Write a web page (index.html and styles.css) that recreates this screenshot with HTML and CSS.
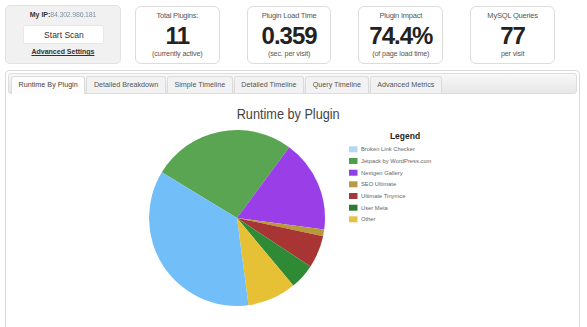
FILE: index.html
```html
<!DOCTYPE html>
<html>
<head>
<meta charset="utf-8">
<link rel="stylesheet" href="styles.css">
</head>
<body>
<div class="page">
  <div class="stats">
    <div class="ipbox">
      <div class="ipline"><b>My IP:</b><span class="ip">84.302.986.181</span></div>
      <button class="scan">Start Scan</button>
      <a class="adv">Advanced Settings</a>
    </div>
    <div class="stat">
      <div class="label">Total Plugins:</div>
      <div class="num">11</div>
      <div class="sub">(currently active)</div>
    </div>
    <div class="stat">
      <div class="label">Plugin Load Time</div>
      <div class="num">0.359</div>
      <div class="sub">(sec. per visit)</div>
    </div>
    <div class="stat">
      <div class="label">Plugin Impact</div>
      <div class="num">74.4%</div>
      <div class="sub">(of page load time)</div>
    </div>
    <div class="stat">
      <div class="label">MySQL Queries</div>
      <div class="num">77</div>
      <div class="sub">per visit</div>
    </div>
  </div>
  <div class="panel">
    <ul class="tabs">
      <li class="active">Runtime By Plugin</li>
      <li>Detailed Breakdown</li>
      <li>Simple Timeline</li>
      <li>Detailed Timeline</li>
      <li>Query Timeline</li>
      <li>Advanced Metrics</li>
    </ul>
    <svg class="chart" width="569" height="240" viewBox="8 94 569 240">
      <text class="ctitle" x="236.7" y="118.5" textLength="103" lengthAdjust="spacingAndGlyphs">Runtime by Plugin</text>
      <path fill="#5aa552" d="M237 218 L161.8 172.3 A88 88 0 0 1 289.2 147.2 Z"/>
      <path fill="#9a3fe8" d="M237 218 L289.2 147.2 A88 88 0 0 1 324.2 229.6 Z"/>
      <path fill="#b89a3a" d="M237 218 L324.2 229.6 A88 88 0 0 1 323.1 236.3 Z"/>
      <path fill="#a83434" d="M237 218 L323.1 236.3 A88 88 0 0 1 310.5 266.4 Z"/>
      <path fill="#2f8a36" d="M237 218 L310.5 266.4 A88 88 0 0 1 293.3 285.6 Z"/>
      <path fill="#e6c135" d="M237 218 L293.3 285.6 A88 88 0 0 1 248.5 305.2 Z"/>
      <path fill="#72bef9" d="M237 218 L248.5 305.2 A88 88 0 0 1 161.8 172.3 Z"/>
      <text class="ltitle" x="405" y="139" text-anchor="middle">Legend</text>
      <rect x="349" y="146.3" width="8.5" height="6" fill="#b3d8f2"/>
      <text class="litem" x="361" y="151.4">Broken Link Checker</text>
      <rect x="349" y="158" width="8.5" height="6" fill="#4d9f4d"/>
      <text class="litem" x="361" y="163.1">Jetpack by WordPress.com</text>
      <rect x="349" y="169.7" width="8.5" height="6" fill="#8f3fe2"/>
      <text class="litem" x="361" y="174.8">Nextgen Gallery</text>
      <rect x="349" y="181.3" width="8.5" height="6" fill="#b89a45"/>
      <text class="litem" x="361" y="186.4">SEO Ultimate</text>
      <rect x="349" y="193" width="8.5" height="6" fill="#a33a3a"/>
      <text class="litem" x="361" y="198.1">Ultimate Tinymce</text>
      <rect x="349" y="204.7" width="8.5" height="6" fill="#2f7a35"/>
      <text class="litem" x="361" y="209.8">User Meta</text>
      <rect x="349" y="216.3" width="8.5" height="6" fill="#e6c24a"/>
      <text class="litem" x="361" y="221.4">Other</text>
    </svg>
  </div>
</div>
</body>
</html>
```

FILE: styles.css
```css
body {
  margin: 0;
  background: #fff;
  color: #333;
  font-family: "Liberation Sans", Arial, sans-serif;
  overflow: hidden;
}
.page {
  padding: 5px;
}
.stats {
  display: flex;
  align-items: flex-start;
  height: 59px;
}
.ipbox {
  width: 119px;
  height: 59px;
  box-sizing: border-box;
  background: #f1f1f1;
  border: 1px solid #e2e2e2;
  border-radius: 5px;
  display: flex;
  flex-direction: column;
  align-items: center;
  margin-right: 14px;
}
.ipline {
  margin-top: 4px;
  font-size: 7px;
  line-height: 10px;
  color: #333;
}
.ip {
  color: #8193a8;
  filter: blur(0.4px);
  letter-spacing: -0.2px;
}
.scan {
  margin-top: 5px;
  width: 81px;
  height: 19px;
  margin-left: 2px;
  background: #fff;
  border: 1px solid #e8e8e8;
  border-radius: 2px;
  font-family: "Liberation Sans", Arial, sans-serif;
  font-size: 8.5px;
  color: #333;
  padding: 0;
}
.adv {
  margin-top: 3px;
  font-size: 7px;
  line-height: 10px;
  font-weight: bold;
  text-decoration: underline;
  color: #333;
}
.stat {
  width: 87px;
  height: 58px;
  box-sizing: border-box;
  margin-top: 1px;
  margin-right: 27px;
  padding-top: 4px;
  border: 1px solid #dcdcdc;
  border-radius: 6px;
  background: #fff;
  text-align: center;
}
.label {
  font-size: 7.5px;
  line-height: 10px;
  letter-spacing: -0.2px;
  color: #555;
}
.num {
  margin-top: 2px;
  font-size: 24px;
  line-height: 26px;
  font-weight: bold;
  letter-spacing: -1px;
  color: #222;
}
.sub {
  font-size: 7.2px;
  line-height: 10px;
  letter-spacing: -0.15px;
  color: #555;
}
.panel {
  margin-top: 6px;
  width: 575px;
  height: 320px;
  box-sizing: border-box;
  border: 1px solid #dadada;
  border-radius: 4px;
  padding: 2px;
}
.tabs {
  list-style: none;
  margin: 0;
  padding: 2px 0 0 2px;
  display: flex;
  align-items: flex-start;
  height: 17px;
  background: linear-gradient(#f8f8f8, #e7e7e7);
  border: 1px solid #dddddd;
  border-radius: 3px;
}
.tabs li {
  font-size: 7.2px;
  line-height: 16px;
  padding: 0 6.6px;
  border: 1px solid #dcdcdc;
  border-bottom: 0;
  border-radius: 3px 3px 0 0;
  margin-right: 1px;
  background: #f2f2f2;
  color: #555;
  white-space: nowrap;
}
.tabs li.active {
  background: #fdfdfd;
  padding-bottom: 1px;
  margin-bottom: -1px;
  color: #444;
}
.chart {
  display: block;
}
.chart text {
  font-family: "Liberation Sans", Arial, sans-serif;
}
.ctitle {
  font-size: 14px;
  fill: #444;
}
.ltitle {
  font-size: 8.5px;
  font-weight: bold;
  fill: #222;
}
.litem {
  font-size: 5.8px;
  fill: #666;
}
```
